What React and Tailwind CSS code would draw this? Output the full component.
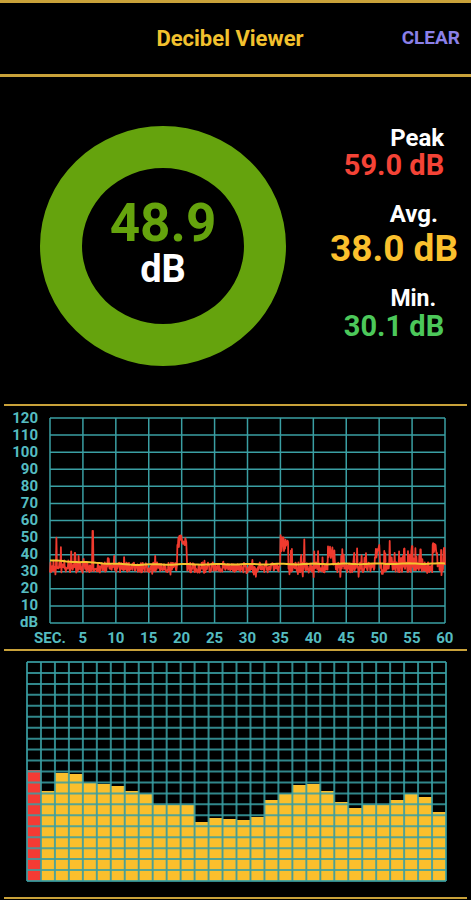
import { useMemo } from 'react';

const TEAL = '#3a9fa3';

// bar heights in px for the 30 columns (first one is the live red column)
const BARS = [111, 90, 108, 107, 98, 97, 95, 90, 87, 76, 76, 76, 59, 63, 62, 61, 64, 81, 87, 96, 97, 90, 79, 73, 76, 76, 81, 87, 84, 69];

const Y_LABELS = ['120', '110', '100', '90', '80', '70', '60', '50', '40', '30', '20', '10', 'dB'];
const X_LABELS = ['SEC.', '5', '10', '15', '20', '25', '30', '35', '40', '45', '50', '55', '60'];

function makeRandom(seed) {
  let s = seed;
  return () => {
    s = (s * 16807) % 2147483647;
    return (s - 1) / 2147483646;
  };
}

const CHART_W = 395;
const CHART_H = 205;

function buildHistory() {
  const r = makeRandom(1234);
  const bursts = [
    [19.3, 20.7, 44, 8],
    [35.0, 36.2, 42, 10],
    [42.2, 43.0, 38, 7],
    [49.3, 50.1, 38, 8],
    [58.1, 58.8, 40, 8],
  ];
  const spikes = [
    [1.0, 50], [3.2, 42], [3.8, 41], [6.5, 54], [8.8, 38], [38.6, 49],
    [40.1, 42], [44.6, 40], [46.2, 41], [51.6, 48], [53.0, 42], [55.0, 45], [56.3, 43], [59.9, 44],
  ];
  const pts = [];
  const n = 800;
  for (let i = 0; i <= n; i++) {
    const t = (i / n) * 60;
    let v = 32.5 + (r() - 0.5) * 6;
    if (r() < 0.05) v -= 3;
    const noisy = t < 4.5 || t > 36.5;
    if (noisy && r() < 0.16) v += 3 + r() * 7;
    if (!noisy && r() < 0.05) v += 2 + r() * 4;
    for (const [a, b, lo, amp] of bursts) {
      if (t >= a && t <= b) v = lo + r() * amp;
    }
    for (const [st, sv] of spikes) {
      if (Math.abs(t - st) < 0.05) v = sv;
    }
    pts.push([t, v]);
  }
  const toXY = ([t, v]) => `${((t / 60) * CHART_W).toFixed(1)},${(CHART_H - (v / 120) * CHART_H).toFixed(1)}`;
  const red = 'M' + pts.map(toXY).join(' L');

  const avg = [];
  for (let i = 0; i <= 120; i++) {
    const t = i / 2;
    let v = t < 12 ? 36.6 - 2.4 * (t / 12) : 34.2 + 0.6 * ((t - 12) / 48);
    v += Math.sin(t * 1.3) * 0.2;
    avg.push([t, v]);
  }
  const yellow = 'M' + avg.map(toXY).join(' L');
  return { red, yellow };
}

function Divider() {
  return <div className="h-[2px] mx-[4px] bg-[#c9a23a]" />;
}

function LevelRing() {
  return (
    <div className="ml-[40px] mt-[49px] w-[246px] h-[240px] rounded-[50%] border-[42px] border-[#65a30d] flex flex-col items-center justify-center pb-[8px]">
      <div className="text-[53px] leading-none font-bold text-[#65a30d]">48.9</div>
      <div className="text-[38px] leading-none font-bold text-white">dB</div>
    </div>
  );
}

function Stats() {
  return (
    <div className="ml-[38px] w-[140px] flex flex-col items-center">
      <div className="flex flex-col items-end mt-[49px]">
        <div className="text-[24px] leading-none font-bold text-white">Peak</div>
        <div className="text-[29px] leading-none font-bold text-[#f44336] mt-[1px]">59.0 dB</div>
      </div>
      <div className="flex flex-col items-end mt-[22px]">
        <div className="text-[24px] leading-none font-bold text-white mr-[20px]">Avg.</div>
        <div className="text-[37px] leading-none font-bold text-[#fbc02d] mt-[4px]">38.0 dB</div>
      </div>
      <div className="flex flex-col items-end mt-[20px]">
        <div className="text-[23px] leading-none font-bold text-white mr-[8px]">Min.</div>
        <div className="text-[29px] leading-none font-bold text-[#4cc85a] mt-[2px]">30.1 dB</div>
      </div>
    </div>
  );
}

function HistoryChart() {
  const { red, yellow } = useMemo(buildHistory, []);
  return (
    <div className="h-[243px]">
      <div className="flex items-start">
        <div className="w-[38px] mt-[3.5px] h-[221px] flex flex-col justify-between text-right">
          {Y_LABELS.map((l) => (
            <div key={l} className="h-[17px] leading-[17px] text-[15px] font-bold text-[#55bcc0]">
              {l}
            </div>
          ))}
        </div>
        <svg className="ml-[12px] mt-[12px] overflow-visible" width={CHART_W} height={CHART_H}>
          {Array.from({ length: 13 }, (_, i) => (
            <line key={'h' + i} x1={0} x2={CHART_W} y1={(i * CHART_H) / 12} y2={(i * CHART_H) / 12} stroke={TEAL} strokeWidth={1.5} />
          ))}
          {Array.from({ length: 13 }, (_, i) => (
            <line key={'v' + i} y1={0} y2={CHART_H} x1={(i * CHART_W) / 12} x2={(i * CHART_W) / 12} stroke={TEAL} strokeWidth={1.5} />
          ))}
          <path d={red} fill="none" stroke="#f03a2e" strokeWidth={1.8} strokeLinejoin="round" />
          <path d={yellow} fill="none" stroke="#f5c430" strokeWidth={2} />
        </svg>
      </div>
      <div className="ml-[34px] -mt-[1px] w-[427px] flex justify-between">
        {X_LABELS.map((l) => (
          <div key={l} className="w-[32px] h-[17px] leading-[17px] text-center text-[15px] font-bold text-[#55bcc0]">
            {l}
          </div>
        ))}
      </div>
    </div>
  );
}

function BarChart() {
  const w = 419;
  const h = 219;
  const cols = 30;
  const rows = 20;
  const cw = w / cols;
  const rh = h / rows;
  return (
    <div className="h-[246px] pt-[11px] pl-[27px]">
      <svg className="overflow-visible" width={w} height={h}>
        {BARS.map((bh, i) => (
          <rect key={i} x={i * cw} y={h - bh} width={cw} height={bh} fill={i === 0 ? '#f43b34' : '#fbbf2c'} />
        ))}
        {Array.from({ length: rows + 1 }, (_, i) => (
          <line key={'h' + i} x1={0} x2={w} y1={i * rh} y2={i * rh} stroke={TEAL} strokeOpacity={0.85} strokeWidth={2} />
        ))}
        {Array.from({ length: cols + 1 }, (_, i) => (
          <line key={'v' + i} y1={0} y2={h} x1={i * cw} x2={i * cw} stroke={TEAL} strokeOpacity={0.85} strokeWidth={2} />
        ))}
      </svg>
    </div>
  );
}

export default function App() {
  return (
    <div className="w-[471px] h-[900px] bg-black overflow-hidden font-['Roboto',sans-serif]">
      {/* Header */}
      <div className="h-[77px] border-t-[3px] border-b-[3px] border-[#c9a23a] flex items-center">
        <div className="flex-1" />
        <div className="text-[22px] font-bold text-[#f2c12e]">Decibel Viewer</div>
        <div className="flex-1 flex justify-end pr-[11px]">
          <span className="text-[19px] font-bold text-[#8b80e8]">CLEAR</span>
        </div>
      </div>

      {/* Live level + stats */}
      <div className="h-[327px] flex items-start">
        <LevelRing />
        <Stats />
      </div>
      <Divider />

      <HistoryChart />
      <Divider />

      <BarChart />
      <Divider />
    </div>
  );
}
